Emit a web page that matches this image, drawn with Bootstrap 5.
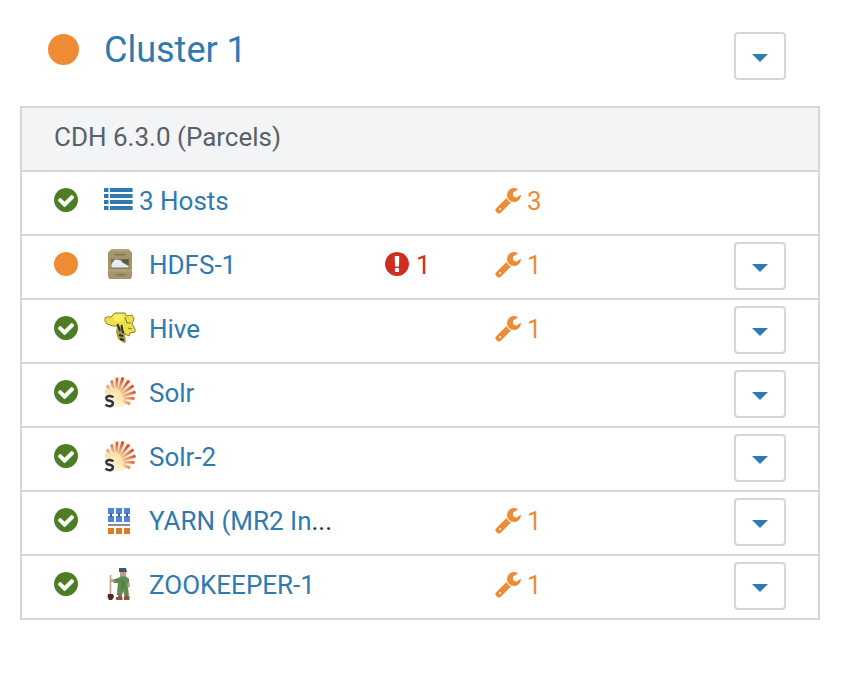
<!DOCTYPE html>
<html lang="en">
<head>
<meta charset="utf-8">
<meta name="viewport" content="width=device-width, initial-scale=1">
<title>Cluster 1</title>
<link href="https://cdn.jsdelivr.net/npm/bootstrap@5.3.0/dist/css/bootstrap.min.css" rel="stylesheet">
<style>
body{font-family:Roboto,sans-serif;font-size:26px;line-height:36px;color:#2a2f33;background:#fff}
.cluster{padding:20px 36px 0 20px}
.cluster-head{height:86px;padding:12px 34px 0 28px}
.cluster-dot{width:31px;height:31px;margin:2px 25px 0 0;border-radius:50%;background:#f08b35;flex:none}
.cluster-name{font-size:36px;line-height:36px;font-weight:400;color:#2f7ab0}
.services{border:2px solid #d5d6db;--bs-list-group-border-radius:0}
.services>li{height:64px;border:0;border-bottom:2px solid #d5d6db;background:#fff;color:inherit}
.services>li:last-child{border-bottom:0;height:62px}
.services>.parcels{background:#f3f4f6;color:#5a6067;padding:11px 32px}
.service{display:grid;grid-template-columns:50px 280px 111px 239px 52px;padding:0 32px;align-items:start}
.service>*{margin-top:11px}
.service>.menu-btn{margin-top:6px}
.service a{color:#2f7ab0;text-decoration:none}
.state{width:28px;height:28px;margin:3px 0 0 -2px;fill:#4e7d25;display:block}
.state-dot{width:24px;height:24px;margin-top:5px;border-radius:50%;background:#f08b35}
.glyph{width:28px;height:28px;margin:3px 5px 0 -1px;fill:currentColor;flex:none}
.svc-icon{width:32px;height:32px;margin:1px 13px 0 0;flex:none;overflow:visible}
.soft{filter:blur(.6px)}
.hosts-icon{width:29px;height:22px;margin:5px 6px 0 0;fill:#2f7ab0;flex:none}
.config{color:#f08b35}
.error{color:#cc2f20}
.menu-btn{display:flex;align-items:flex-start;width:52px;height:48px;border:2px solid #d5d6db;border-radius:4px;background:#fff;padding:20px 0 0 16px;color:#2f7ab0;line-height:0;flex:none}
.menu-btn::after{margin:0;border-top:8px solid;border-right:8px solid transparent;border-left:8px solid transparent}
</style>
</head>
<body>
<svg class="position-absolute" width="0" height="0" xmlns="http://www.w3.org/2000/svg">
<defs><radialGradient id="ray" gradientUnits="userSpaceOnUse" cx="10" cy="23" r="22"><stop offset=".3" stop-color="#fbe3a4"/><stop offset=".62" stop-color="#eaa57a"/><stop offset="1" stop-color="#c64d36"/></radialGradient></defs>
<symbol id="ok" viewBox="0 0 1792 1792"><path d="M1412 734q0-28-18-46l-91-90q-19-19-45-19t-45 19l-408 407-226-226q-19-19-45-19t-45 19l-91 90q-18 18-18 46 0 27 18 45l362 362q19 19 45 19 27 0 46-19l543-543q18-18 18-45zm252 162q0 209-103 385.5t-279.5 279.5-385.5 103-385.5-103-279.5-279.5-103-385.5 103-385.5 279.5-279.5 385.5-103 385.5 103 279.5 279.5 103 385.5z"/></symbol>
<symbol id="bad" viewBox="0 0 1792 1792"><path d="M896 128q209 0 385.5 103t279.5 279.5 103 385.5-103 385.5-279.5 279.5-385.5 103-385.5-103-279.5-279.5-103-385.5 103-385.5 279.5-279.5 385.5-103zm128 1247v-190q0-14-9-23.5t-22-9.5h-192q-13 0-23 10t-10 23v190q0 13 10 23t23 10h192q13 0 22-9.5t9-23.5zm-2-344l18-621q0-12-10-18-10-8-24-8h-220q-14 0-24 8-10 6-10 18l17 621q0 10 10 17.5t24 7.5h185q14 0 23.5-7.5t10.5-17.5z"/></symbol>
<symbol id="wrench" viewBox="0 0 1792 1792"><path d="M448 1472q0-26-19-45t-45-19-45 19-19 45 19 45 45 19 45-19 19-45zm644-420l-682 682q-37 37-90 37-52 0-91-37l-106-108q-38-36-38-90 0-53 38-91l681-681q39 98 114.5 173.5t173.5 114.5zm634-435q0 39-23 106-47 134-164.5 217.5t-258.5 83.5q-185 0-316.5-131.5t-131.5-316.5 131.5-316.5 316.5-131.5q58 0 121.5 16.5t107.5 46.5q16 11 16 28t-16 28l-293 169v224l193 107q5-3 79-48.5t135.5-81 70.5-35.5q15 0 23.500 10t8.500 25z"/></symbol>
<symbol id="shell" viewBox="0 0 32 32">
<path d="M1 19Q0 12 5 7Q9 2 16 2Q23 1 28 7Q32 13 31 20Q30 26 23 29Q15 33 9 29Z" fill="#fdeed6"/>
<path d="M12 22L1.500 15M12 22L3 9.500M12 22L7.500 4.500M12 22L13 1.800M12 22L19 1.500M12 22L25 4.500M12 22L29.500 9.500M12 22L31.500 16M12 22L30.500 22.500M12 22L26 28" fill="none" stroke="url(#ray)" stroke-width="2.700"/>
<path d="M0 17L5 12L13 12L18 17L20 24L17 30L9 30Z" fill="#fdf0bd" opacity=".5"/>
<path d="M9.300 21.400Q7.800 19.700 5 20Q2 20.400 2.400 22.700Q2.800 24.400 5.700 24.800Q9 25.300 8.900 27.700Q8.600 30.200 5.600 30.200Q2.800 30.200 1.600 28.300" fill="none" stroke="#fff" stroke-width="4" opacity=".6"/>
<path d="M9.300 21.400Q7.800 19.700 5 20Q2 20.400 2.400 22.700Q2.800 24.400 5.700 24.800Q9 25.300 8.900 27.700Q8.600 30.200 5.600 30.200Q2.800 30.200 1.600 28.300" fill="none" stroke="#333" stroke-width="2.500"/>
</symbol>
</svg>

<main class="cluster">
<header class="cluster-head d-flex align-items-start">
<span class="cluster-dot"></span>
<h1 class="cluster-name mb-0 flex-grow-1">Cluster 1</h1>
<button class="menu-btn dropdown-toggle" type="button" aria-label="Cluster actions"></button>
</header>
<ul class="services list-group">
<li class="list-group-item parcels">CDH 6.3.0 (Parcels)</li>

<li class="list-group-item service">
<div><svg class="state"><use href="#ok"/></svg></div>
<div class="d-flex"><svg class="hosts-icon" viewBox="0 0 29 22"><path d="M0 0h4.500v4H0zM6 0h22.600v4H6zM0 6h4.500v4H0zM6 6h22.600v4H6zM0 12h4.500v4H0zM6 12h22.600v4H6zM0 18h4.500v4H0zM6 18h22.600v4H6z"/></svg><a href="#">3 Hosts</a></div>
<div></div>
<div class="config d-flex"><svg class="glyph"><use href="#wrench"/></svg>3</div>
</li>

<li class="list-group-item service">
<div class="d-flex"><span class="state-dot"></span></div>
<div class="d-flex"><svg class="svc-icon soft" viewBox="0 0 32 32">
<path d="M7.500 1H24.500L28 4.500V29L26.500 31H5.500L4 29V4.500Z" fill="#a3946b"/>
<path d="M7.500 1H24.500L27 3.500H5Z" fill="#b3a47c"/><path d="M11 6H21V7.500H11ZM12 26H21V27.500H12Z" fill="#85764f"/>
<path d="M7 11H25V20.500H7Z" fill="#7d7252"/><path d="M7.500 19.500V16L11 11.500L16 12L19 15L24.500 18V19.500Z" fill="#e7ebf5"/><path d="M18 11.500H24.500V17L19 14Z" fill="#5b543f"/>
<path d="M4.500 21.500H27.500V23.500H4.500Z" fill="#b3a47c"/></svg><a href="#">HDFS-1</a></div>
<div class="error d-flex"><svg class="glyph"><use href="#bad"/></svg>1</div>
<div class="config d-flex"><svg class="glyph"><use href="#wrench"/></svg>1</div>
<button class="menu-btn dropdown-toggle" type="button" aria-label="HDFS-1 actions"></button>
</li>

<li class="list-group-item service">
<div><svg class="state"><use href="#ok"/></svg></div>
<div class="d-flex"><svg class="svc-icon soft" viewBox="0 0 32 32">
<path d="M13 14L18 14L21 22L22 30L20 31L14 27L12 20Z" fill="#a39a4b"/>
<path d="M1 6Q3 4 7 5L11 1L21 1L23 4L28 3L30 7L28 12L31 17L31 20L26 21L25 24L21 22L18 17L14 14L9 14L3 12L1 9Z" fill="#efe04a" stroke="#8b8238" stroke-width="1"/>
<path d="M10 3L18 2L20 6L16 10L10 8Z" fill="#fbec66"/>
<path d="M13.500 12L16 19M17.500 13L19 21M15 23L19 24M16 27L20 28" stroke="#33311b" stroke-width="2"/>
<path d="M21 5L23 11L27 11M24 16L28 17" stroke="#81772e" stroke-width="1" fill="none"/></svg><a href="#">Hive</a></div>
<div></div>
<div class="config d-flex"><svg class="glyph"><use href="#wrench"/></svg>1</div>
<button class="menu-btn dropdown-toggle" type="button" aria-label="Hive actions"></button>
</li>

<li class="list-group-item service">
<div><svg class="state"><use href="#ok"/></svg></div>
<div class="d-flex"><svg class="svc-icon soft"><use href="#shell"/></svg><a href="#">Solr</a></div>
<div></div><div></div>
<button class="menu-btn dropdown-toggle" type="button" aria-label="Solr actions"></button>
</li>

<li class="list-group-item service">
<div><svg class="state"><use href="#ok"/></svg></div>
<div class="d-flex"><svg class="svc-icon soft"><use href="#shell"/></svg><a href="#">Solr-2</a></div>
<div></div><div></div>
<button class="menu-btn dropdown-toggle" type="button" aria-label="Solr-2 actions"></button>
</li>

<li class="list-group-item service">
<div><svg class="state"><use href="#ok"/></svg></div>
<div class="d-flex"><svg class="svc-icon soft" viewBox="0 0 32 32">
<path d="M4 4h6v6H4zM12 4h6v6h-6zM20 4h6v6h-6zM4 12h6v6H4zM12 12h6v6h-6zM20 12h6v6h-6z" fill="#5085dd"/>
<path d="M6 9h2v4H6zM14 9h2v4h-2zM22 9h2v4h-2z" fill="#49618a"/>
<path d="M4 20h22v2H4z" fill="#8c8c8c"/><path d="M4 24h6v6H4zM12 24h6v6h-6zM20 24h6v6h-6z" fill="#dc7c28"/></svg><span><a href="#">YARN (MR2 In</a>...</span></div>
<div></div>
<div class="config d-flex"><svg class="glyph"><use href="#wrench"/></svg>1</div>
<button class="menu-btn dropdown-toggle" type="button" aria-label="YARN actions"></button>
</li>

<li class="list-group-item service">
<div><svg class="state"><use href="#ok"/></svg></div>
<div class="d-flex"><svg class="svc-icon soft" viewBox="0 0 32 32">
<path d="M6.500 7V26" stroke="#c9a385" stroke-width="1.700"/><path d="M4 26H9L10 29L8 32H5L3.500 29Z" fill="#4a2b25"/>
<path d="M16 3H22V9H16Z" fill="#c99b7c"/><path d="M15 0H22L23 4H15Z" fill="#455575"/>
<path d="M14 10L17 8.500H22L25 11V19L24 20L25 27H20L19.500 23L18 27H13L13.500 19L14 15L10 15L8 12Z" fill="#5c8c50"/>
<path d="M17 12L20 15L18 20" fill="none" stroke="#416d38"/>
<path d="M6 11H9L11 14H7ZM23.500 15H26V19H23.500Z" fill="#c8a082"/>
<path d="M14 26H18V29H14ZM20.500 26H24.500V29H20.500Z" fill="#8b6c4e"/><path d="M12 29H18.500V32H12ZM20 28H25.500V32H20Z" fill="#87583c"/></svg><a href="#">ZOOKEEPER-1</a></div>
<div></div>
<div class="config d-flex"><svg class="glyph"><use href="#wrench"/></svg>1</div>
<button class="menu-btn dropdown-toggle" type="button" aria-label="ZOOKEEPER-1 actions"></button>
</li>
</ul>
</main>
<script src="https://cdn.jsdelivr.net/npm/bootstrap@5.3.0/dist/js/bootstrap.bundle.min.js"></script>
</body>
</html>
